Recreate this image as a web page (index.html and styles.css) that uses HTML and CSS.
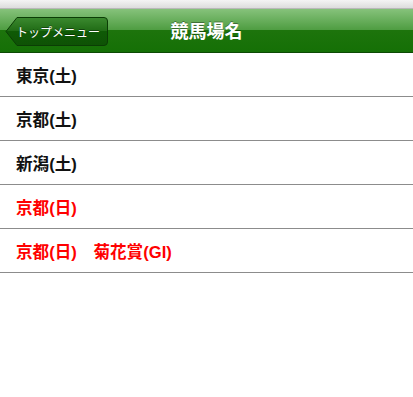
FILE: index.html
```html
<!DOCTYPE html>
<html lang="ja">
<head>
<meta charset="utf-8">
<link rel="stylesheet" href="styles.css">
</head>
<body>
<div class="status"></div>
<header class="nav">
  <a class="back">
    <svg class="back-shape" width="104" height="31" viewBox="0 0 104 31">
      <defs>
        <linearGradient id="bg" x1="0" y1="0" x2="0" y2="1">
          <stop offset="0" stop-color="#3c8a30"/>
          <stop offset="0.5" stop-color="#1f6a14"/>
          <stop offset="0.5" stop-color="#0f5a06"/>
          <stop offset="1" stop-color="#0e5205"/>
        </linearGradient>
      </defs>
      <path d="M1 15.5 L12 1.5 H99 Q102.5 1.5 102.5 5 V26 Q102.5 29.5 99 29.5 H12 Z" fill="url(#bg)" stroke="#0b3d05" stroke-width="1"/>
    </svg>
    <span class="back-label">トップメニュー</span>
  </a>
  <h1 class="title">競馬場名</h1>
</header>
<ul class="list">
  <li class="item">東京(土)</li>
  <li class="item">京都(土)</li>
  <li class="item">新潟(土)</li>
  <li class="item red">京都(日)</li>
  <li class="item red">京都(日)　菊花賞(GI)</li>
</ul>
</body>
</html>
```
FILE: styles.css
```css
* { box-sizing: border-box; }
html, body { margin: 0; padding: 0; background: #fff; }
body { font-family: "Liberation Sans", "Noto Sans CJK JP", sans-serif; }
.status {
  height: 9px;
  background: linear-gradient(#f4f4f4, #dcdcdc);
  border-bottom: 1px solid #b8b8b8;
}
.nav {
  position: relative;
  height: 44px;
  display: flex;
  align-items: center;
  justify-content: center;
  background: linear-gradient(#86c27b 0%, #4d9c40 50%, #1d740c 50%, #157006 100%);
  border-bottom: 1px solid #0d4a05;
}
.back {
  position: absolute;
  left: 5px;
  top: 7px;
  width: 104px;
  height: 31px;
  display: flex;
  align-items: center;
}
.back-shape { position: absolute; left: 0; top: 0; }
.back-label {
  position: relative;
  padding-left: 11px;
  color: #fff;
  font-size: 12px;
  white-space: nowrap;
  text-shadow: 0 -1px 0 rgba(0,0,0,0.4);
}
.title {
  margin: 0 0 2px 0;
  color: #fff;
  font-size: 18px;
  font-weight: bold;
  text-shadow: 0 -1px 0 rgba(0,0,0,0.35);
}
.list { list-style: none; margin: 0; padding: 0; }
.item {
  height: 44px;
  display: flex;
  align-items: center;
  padding-left: 16px;
  border-bottom: 1px solid #8c8c8c;
  font-size: 16.6px;
  font-weight: bold;
  color: #111;
  white-space: pre;
}
.item.red { color: #f00; }
```
